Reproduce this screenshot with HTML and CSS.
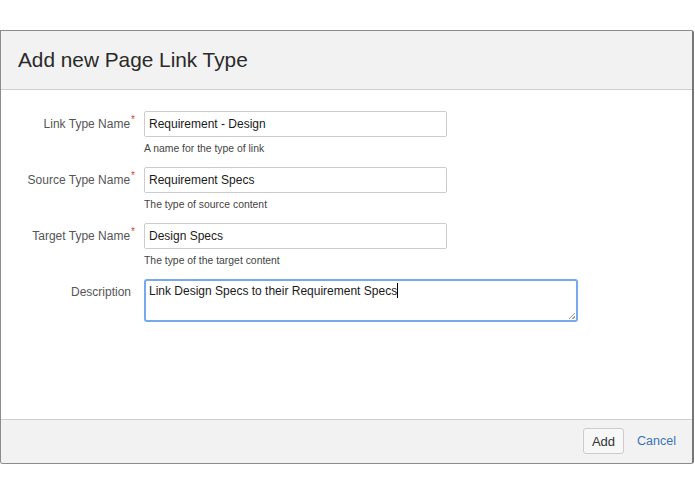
FILE: index.html
```html
<!DOCTYPE html>
<html>
<head>
<meta charset="utf-8">
<link rel="stylesheet" href="styles.css">
</head>
<body>
<div class="dialog">
  <div class="dialog-header"><h2 class="dialog-title">Add new Page Link Type</h2></div>
  <div class="dialog-body">
    <form class="form">
      <div class="row">
        <label class="label">Link Type Name<span class="req">*</span></label>
        <div class="field">
          <input class="text" type="text" value="Requirement - Design">
          <div class="help">A name for the type of link</div>
        </div>
      </div>
      <div class="row">
        <label class="label">Source Type Name<span class="req">*</span></label>
        <div class="field">
          <input class="text" type="text" value="Requirement Specs">
          <div class="help">The type of source content</div>
        </div>
      </div>
      <div class="row">
        <label class="label">Target Type Name<span class="req">*</span></label>
        <div class="field">
          <input class="text" type="text" value="Design Specs">
          <div class="help">The type of the target content</div>
        </div>
      </div>
      <div class="row">
        <label class="label">Description</label>
        <div class="field">
          <div class="textarea">Link Design Specs to their Requirement Specs<span class="caret"></span><span class="grip"></span></div>
        </div>
      </div>
    </form>
  </div>
  <div class="dialog-footer">
    <button class="btn" type="button">Add</button>
    <a class="cancel" href="#">Cancel</a>
  </div>
</div>
</body>
</html>
```
FILE: styles.css
```css
html, body {
  margin: 0;
  padding: 0;
  background: #ffffff;
  font-family: "Liberation Sans", Arial, sans-serif;
  color: #333;
}
body {
  padding-top: 30px;
}
.dialog {
  width: 691px;
  height: 432px;
  border: 1px solid #8c8c8c;
  border-right: 2px solid #777;
  border-radius: 0 3px 3px 3px;
  display: flex;
  flex-direction: column;
  overflow: hidden;
  background: #fff;
}
.dialog-header {
  height: 58px;
  background: #f2f2f2;
  border-bottom: 1px solid #cfcfcf;
  display: flex;
  align-items: center;
  padding-left: 17px;
}
.dialog-title {
  margin: 0;
  margin-top: -1px;
  font-size: 20.8px;
  font-weight: normal;
  color: #2a2a2a;
}
.dialog-body {
  flex: 1;
  padding-top: 21px;
}
.form {
  display: flex;
  flex-direction: column;
  gap: 11px;
}
.row {
  display: flex;
  align-items: flex-start;
}
.label {
  text-align: right;
  font-size: 12px;
  color: #555;
  line-height: 26px;
  box-sizing: border-box;
  width: 143px;
  padding-right: 13px;
}
.req {
  color: #d04437;
  font-size: 10px;
  position: relative;
  top: -5px;
  margin-left: 1px;
  margin-right: -4px;
}
.field {
  display: flex;
  flex-direction: column;
}
.text {
  width: 303px;
  height: 26px;
  box-sizing: border-box;
  border: 1px solid #ccc;
  border-radius: 2px;
  padding: 0 4px;
  font-family: "Liberation Sans", Arial, sans-serif;
  font-size: 12px;
  color: #1a1a1a;
  margin: 0;
  background: #fff;
}
.help {
  margin-top: 5px;
  font-size: 10.4px;
  line-height: 14px;
  color: #444;
}
.textarea {
  position: relative;
  width: 434px;
  height: 43px;
  box-sizing: border-box;
  border: 2px solid #78a9ee;
  border-radius: 3px;
  padding: 2px 3px;
  font-size: 12px;
  line-height: 16px;
  color: #1a1a1a;
}
.caret {
  display: inline-block;
  width: 1px;
  height: 15px;
  background: #000;
  vertical-align: -3px;
}
.grip {
  position: absolute;
  right: 1px;
  bottom: 1px;
  width: 6px;
  height: 6px;
  background: linear-gradient(135deg, transparent 45%, #999 45%, #999 55%, transparent 55%, transparent 75%, #999 75%, #999 85%, transparent 85%);
}
.dialog-footer {
  height: 44px;
  background: #f2f2f2;
  border-top: 1px solid #cfcfcf;
  display: flex;
  align-items: flex-start;
  justify-content: flex-end;
  padding: 8px 16px 0 0;
  box-sizing: border-box;
  gap: 13px;
}
.btn {
  height: 26px;
  padding: 0 8px;
  border: 1px solid #ccc;
  border-radius: 3px;
  background: #f7f7f7;
  font-family: "Liberation Sans", Arial, sans-serif;
  font-size: 13px;
  color: #333;
}
.cancel {
  font-size: 12.5px;
  line-height: 26px;
  color: #3b73af;
  text-decoration: none;
}
```
